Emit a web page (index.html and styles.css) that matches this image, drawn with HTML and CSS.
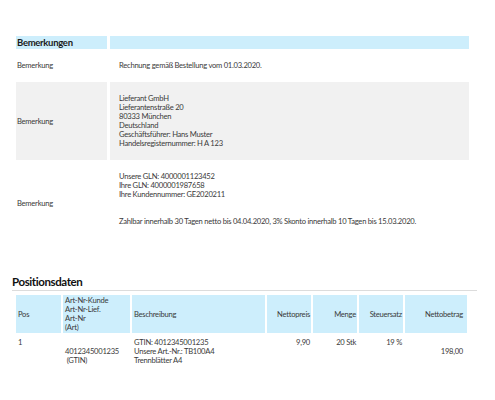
FILE: index.html
```html
<!DOCTYPE html>
<html lang="de">
<head>
<meta charset="utf-8">
<link rel="stylesheet" href="styles.css">
</head>
<body>
<main class="page">
  <table class="remarks">
    <colgroup><col class="c-label"><col class="c-text"></colgroup>
    <thead>
      <tr><th class="sec-title">Bemerkungen</th><th></th></tr>
    </thead>
    <tbody>
      <tr>
        <td class="label">Bemerkung</td>
        <td class="text">Rechnung gemäß Bestellung vom 01.03.2020.</td>
      </tr>
      <tr class="shade">
        <td class="label">Bemerkung</td>
        <td class="text">Lieferant GmbH<br>Lieferantenstraße 20<br>80333 München<br>Deutschland<br>Geschäftsführer: Hans Muster<br>Handelsregisternummer: H A 123</td>
      </tr>
      <tr>
        <td class="label">Bemerkung</td>
        <td class="text">Unsere GLN: 4000001123452<br>Ihre GLN: 4000001987658<br>Ihre Kundennummer: GE2020211<br><br><br>Zahlbar innerhalb 30 Tagen netto bis 04.04.2020, 3% Skonto innerhalb 10 Tagen bis 15.03.2020.<br>&nbsp;</td>
      </tr>
    </tbody>
  </table>

  <h2 class="pos-title">Positionsdaten</h2>

  <table class="items">
    <colgroup>
      <col class="w-pos"><col class="w-art"><col class="w-desc"><col class="w-num"><col class="w-num"><col class="w-num"><col class="w-total">
    </colgroup>
    <thead>
      <tr>
        <th>Pos</th>
        <th>Art-Nr-Kunde<br>Art-Nr-Lief.<br>Art-Nr<br>(Art)</th>
        <th>Beschreibung</th>
        <th class="r">Nettopreis</th>
        <th class="r">Menge</th>
        <th class="r">Steuersatz</th>
        <th class="r total">Nettobetrag</th>
      </tr>
    </thead>
    <tbody>
      <tr>
        <td>1</td>
        <td><br>4012345001235<br>&nbsp;(GTIN)</td>
        <td>GTIN: 4012345001235<br>Unsere Art.-Nr.: TB100A4<br>Trennblätter A4</td>
        <td class="r">9,90</td>
        <td class="r">20 Stk</td>
        <td class="r">19 %</td>
        <td class="r total"><br>198,00</td>
      </tr>
    </tbody>
  </table>
</main>
</body>
</html>
```

FILE: styles.css
```css
* { box-sizing: border-box; }
html, body { margin: 0; padding: 0; background: #fff; }
body {
  font-family: Lato, "Open Sans", sans-serif;
  font-size: 7.6px;
  line-height: 9px;
  letter-spacing: -0.25px;
  color: #3a3a3a;
}
.page {
  padding: 36px 0 0 13px;
}
table {
  border-collapse: separate;
  table-layout: fixed;
}
.remarks {
  width: 459px;
  border-spacing: 3px 0;
}
.c-label { width: 91px; }
.c-text { width: 359px; }
.remarks th {
  background: #cdeefc;
  height: 13px;
  padding: 0;
  text-align: left;
  vertical-align: middle;
}
.remarks th.sec-title {
  font-size: 9.5px;
  line-height: 13px;
  letter-spacing: -0.3px;
  font-weight: 700;
  color: #1b1b1b;
  padding-left: 1px;
}
.remarks td {
  padding: 12px 0;
  vertical-align: middle;
}
.remarks td.label { padding-left: 1px; }
.remarks td.text { padding-left: 9px; }
.shade td { background: #f1f1f1; }

.pos-title {
  margin: 27px 0 0 -1px;
  width: 465px;
  font-size: 11.5px;
  line-height: 16px;
  letter-spacing: -0.4px;
  font-weight: 700;
  color: #111;
  border-bottom: 1px solid #dcdcdc;
}
.items {
  width: 455px;
  margin-top: 2px;
  margin-left: 1px;
  border-spacing: 2px;
}
.w-pos { width: 45px; }
.w-art { width: 67px; }
.w-desc { width: 133px; }
.w-num { width: 44px; }
.w-total { width: 62px; }
.items th {
  background: #cdeefc;
  font-weight: 400;
  text-align: left;
  vertical-align: middle;
  padding: 1px 1px 1px 2px;
  height: 38px;
}
.items td {
  vertical-align: top;
  padding: 3px 1px 3px 2px;
}
.items .r { text-align: right; }
.items .total { padding-right: 4px; }
```
